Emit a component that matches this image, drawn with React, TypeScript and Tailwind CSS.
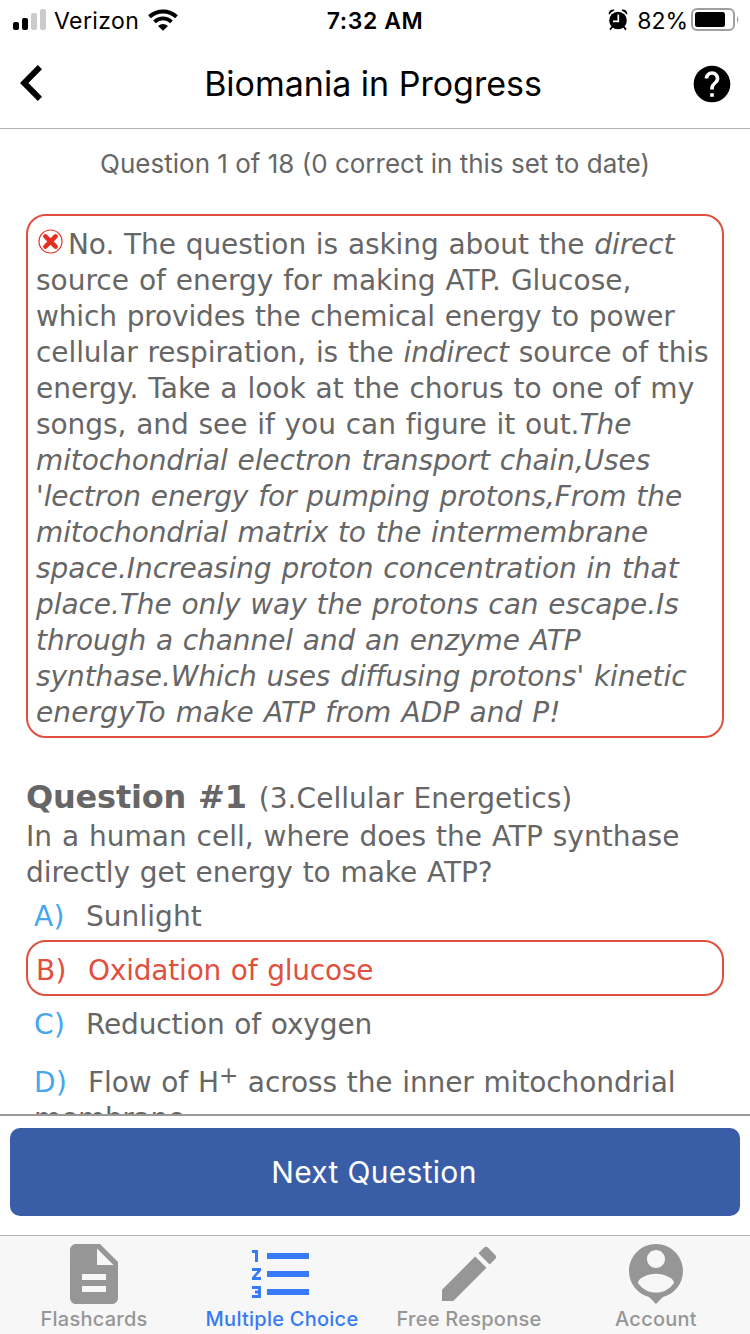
import type { ReactNode } from 'react';
import { MdDescription, MdEdit, MdHelp } from 'react-icons/md';

function StatusBar() {
  return (
    <div className="flex h-10 shrink-0 items-center text-[23px] leading-[40px]">
      <div className="flex w-[250px] items-center pl-[13px]">
        <svg width="34" height="22" viewBox="0 0 34 22">
          <rect x="0" y="13" width="6" height="8" rx="2" />
          <rect x="9" y="9" width="6" height="12" rx="2" />
          <rect x="18" y="4" width="6" height="17" rx="2" fill="#cbcbcb" />
          <rect x="27" y="0" width="6" height="21" rx="2" fill="#cbcbcb" />
        </svg>
        <span className="ml-[7px] w-[86px] whitespace-nowrap pt-[2px] tracking-[0.4px]">Verizon</span>
        <svg className="ml-[8px]" width="30" height="22" viewBox="0 0 30 22">
          <path d="M15 21.8 L10 16.9 Q15 13.2 20 16.9 Z" />
          <path d="M6.5 12.8 A12.5 12.5 0 0 1 23.5 12.8" fill="none" stroke="#000" strokeWidth="3.8" />
          <path d="M1.5 7.7 A20 20 0 0 1 28.5 7.7" fill="none" stroke="#000" strokeWidth="4" />
        </svg>
      </div>
      <div className="w-[250px] whitespace-nowrap pt-[2px] text-center font-semibold tracking-[0.6px]">7:32 AM</div>
      <div className="flex w-[250px] items-center justify-end pr-[10px]">
        <svg width="20" height="22" viewBox="0 0 20 22">
          <circle cx="10" cy="11.5" r="8.8" />
          <path d="M0.6 5 Q1 0.4 6 0.6 L6.4 1.4 Q3 2.6 1.4 5.6 Z M19.4 5 Q19 0.4 14 0.6 L13.6 1.4 Q17 2.6 18.6 5.6 Z" />
          <path d="M4.5 17.5 L2 20.6 M15.5 17.5 L18 20.6" stroke="#000" strokeWidth="1.8" />
          <path d="M10.3 5.5 V12.3 H5" fill="none" stroke="#fff" strokeWidth="1.7" />
        </svg>
        <span className="ml-[9px] whitespace-nowrap pt-[2px]">82%</span>
        <svg className="ml-[3px]" width="49" height="24" viewBox="0 0 49 24">
          <rect x="1" y="1" width="42" height="21" rx="5" fill="none" stroke="#a0a0a0" strokeWidth="2" />
          <rect x="4" y="4" width="30" height="15" rx="2.5" />
          <path d="M46 8 Q49 11.5 46 15 Z" fill="#a0a0a0" />
        </svg>
      </div>
    </div>
  );
}

function Header() {
  return (
    <header className="flex h-[89px] shrink-0 items-center border-b border-[#b2b2b2] pr-4 pl-5">
      <svg className="-mt-[2px]" width="44" height="36" viewBox="0 0 44 36">
        <path d="M22 4.3 L17.8 0 L0 18 L17.8 36 L22 31.7 L8.4 18 Z" />
      </svg>
      <h1 className="flex-1 whitespace-nowrap pr-[8px] text-center text-[34px] leading-[44px]">Biomania in Progress</h1>
      <MdHelp className="size-[44px]" />
    </header>
  );
}

// Every line keeps its own break so the wrapping never depends on the font
function Line({ children, className = '' }: { children: ReactNode; className?: string }) {
  return <span className={`block whitespace-pre ${className}`}>{children}</span>;
}

function Feedback() {
  return (
    <section className="rounded-[20px] border-2 border-[#e0503f] pt-[11px] pb-[5px] pl-2">
      <Line className="tracking-[-0.08px]">
        <svg className="mr-[5px] ml-[2px] inline-block align-[0px]" width="25" height="25" viewBox="0 0 25 25">
          <circle cx="12.5" cy="12.5" r="11.5" fill="none" stroke="#e42f20" strokeWidth="1.2" />
          <path d="M7.4 7.4 L17.6 17.6 M17.6 7.4 L7.4 17.6" stroke="#e42f20" strokeWidth="4.6" strokeLinecap="round" />
        </svg>
        No. The question is asking about the <i>direct</i>
      </Line>
      <Line>source of energy for making ATP. Glucose,</Line>
      <Line className="tracking-[-0.14px]">which provides the chemical energy to power</Line>
      <Line className="tracking-[-0.08px]">cellular respiration, is the <i>indirect</i> source of this</Line>
      <Line>energy. Take a look at the chorus to one of my</Line>
      <Line className="tracking-[-0.06px]">songs, and see if you can figure it out.<i>The</i></Line>
      <Line className="tracking-[-0.11px] italic">mitochondrial electron transport chain,Uses</Line>
      <Line className="tracking-[-0.07px] italic">'lectron energy for pumping protons,From the</Line>
      <Line className="tracking-[-0.11px] italic">mitochondrial matrix to the intermembrane</Line>
      <Line className="tracking-[-0.04px] italic">space.Increasing proton concentration in that</Line>
      <Line className="tracking-[-0.07px] italic">place.The only way the protons can escape.Is</Line>
      <Line className="tracking-[-0.08px] italic">through a channel and an enzyme ATP</Line>
      <Line className="tracking-[-0.08px] italic">synthase.Which uses diffusing protons' kinetic</Line>
      <Line className="tracking-[0.1px] italic">energyTo make ATP from ADP and P!</Line>
    </section>
  );
}

function Answers() {
  return (
    <div className="flex flex-col">
      <div className="flex h-[49px] items-center pt-[3px] pl-2">
        <span className="w-[52px] tracking-[0.4px] text-[#46a6ee]">A)</span>
        <span className="tracking-[0.05px]">Sunlight</span>
      </div>
      <div className="flex h-14 items-center rounded-[20px] border-2 border-[#e0503f] pt-[6px] pl-2 text-[#e0503f]">
        <span className="w-[52px] tracking-[0.4px]">B)</span>
        <span className="tracking-[-0.2px]">Oxidation of glucose</span>
      </div>
      <div className="flex h-[54px] items-center pt-[4px] pl-2">
        <span className="w-[52px] tracking-[0.4px] text-[#46a6ee]">C)</span>
        <span className="tracking-[-0.15px]">Reduction of oxygen</span>
      </div>
      <div className="pt-[15px] pl-2">
        <Line className="tracking-[-0.1px]">
          <span className="inline-block w-[54px] tracking-[0.4px] text-[#46a6ee]">D)</span>
          <span>Flow of H</span>
          <sup className="top-[-9px] text-[23px] leading-none">+</sup> across the inner mitochondrial
        </Line>
        <Line className="tracking-[-0.3px]">membrane</Line>
      </div>
    </div>
  );
}

function Tab({ label, icon, className }: { label: string; icon: ReactNode; className: string }) {
  return (
    <div className={`flex flex-col items-center ${className}`}>
      <div className="mt-[2px] size-[72px]">{icon}</div>
      <span className="-mt-[3px] whitespace-nowrap text-[20px] leading-[24px] font-medium tracking-[0.25px]">{label}</span>
    </div>
  );
}

export default function App() {
  return (
    <div className="flex h-[1334px] w-[750px] flex-col overflow-hidden bg-white font-['Inter',sans-serif] text-black">
      <StatusBar />
      <Header />
      <main className="h-[985px] shrink-0 overflow-hidden px-[26px] font-['DejaVu_Sans',sans-serif] text-[28px] leading-[36px] text-[#666] [word-spacing:1px]">
        <p className="mt-[17px] mb-[32px] text-center font-['Inter',sans-serif] text-[26px] [word-spacing:0px]">
          Question 1 of 18 (0 correct in this set to date)
        </p>
        <Feedback />
        <div className="mt-[40px]">
          <Line className="mb-px leading-[38px]">
            <b className="text-[32px] tracking-[-0.2px]">Question #1</b>
            <span className="ml-[2px] tracking-[0.05px]"> (3.Cellular Energetics)</span>
          </Line>
          <Line>In a human cell, where does the ATP synthase</Line>
          <Line className="tracking-[-0.05px]">directly get energy to make ATP?</Line>
        </div>
        <Answers />
      </main>
      <div className="h-[121px] shrink-0 border-t-2 border-[#999] px-[10px] pt-[12px]">
        <button className="h-[88px] w-full rounded-[10px] bg-[#3a5da8] pr-[2px] text-[30px] tracking-[0.3px] text-white">
          Next Question
        </button>
      </div>
      <nav className="flex h-[99px] shrink-0 border-t border-[#b2b2b2] bg-[#f7f7f7] text-[#969696]">
        <Tab className="w-[188px]" label="Flashcards" icon={<MdDescription className="size-full" />} />
        <Tab
          className="w-[188px] text-[#377af6]"
          label="Multiple Choice"
          icon={
            <svg className="size-full" viewBox="0 0 24 24" fill="currentColor">
              <path d="M2 17h2v.5H3v1h1v.5H2v1h3v-4H2v1zm1-9h1V4H2v1h1v3zm-1 3h1.8L2 13.1v.9h3v-1H3.2L5 10.9V10H2v1zm5-6v2h14V5H7zm0 14h14v-2H7v2zm0-6h14v-2H7v2z" />
            </svg>
          }
        />
        <Tab className="w-[186px]" label="Free Response" icon={<MdEdit className="size-full" />} />
        <Tab
          className="w-[188px]"
          label="Account"
          icon={
            <svg className="size-full" viewBox="0 0 24 24" fill="currentColor">
              <path d="M12 2c-4.97 0-9 4.03-9 9 0 4.17 2.84 7.67 6.69 8.69L12 22l2.31-2.31C18.16 18.67 21 15.17 21 11c0-4.97-4.03-9-9-9zm0 2c1.66 0 3 1.34 3 3s-1.34 3-3 3-3-1.34-3-3 1.34-3 3-3zm0 14.2c-2.5 0-4.71-1.28-6-3.22.03-1.99 4-3.08 6-3.08 1.99 0 5.97 1.09 6 3.08-1.29 1.94-3.5 3.22-6 3.22z" />
            </svg>
          }
        />
      </nav>
    </div>
  );
}
